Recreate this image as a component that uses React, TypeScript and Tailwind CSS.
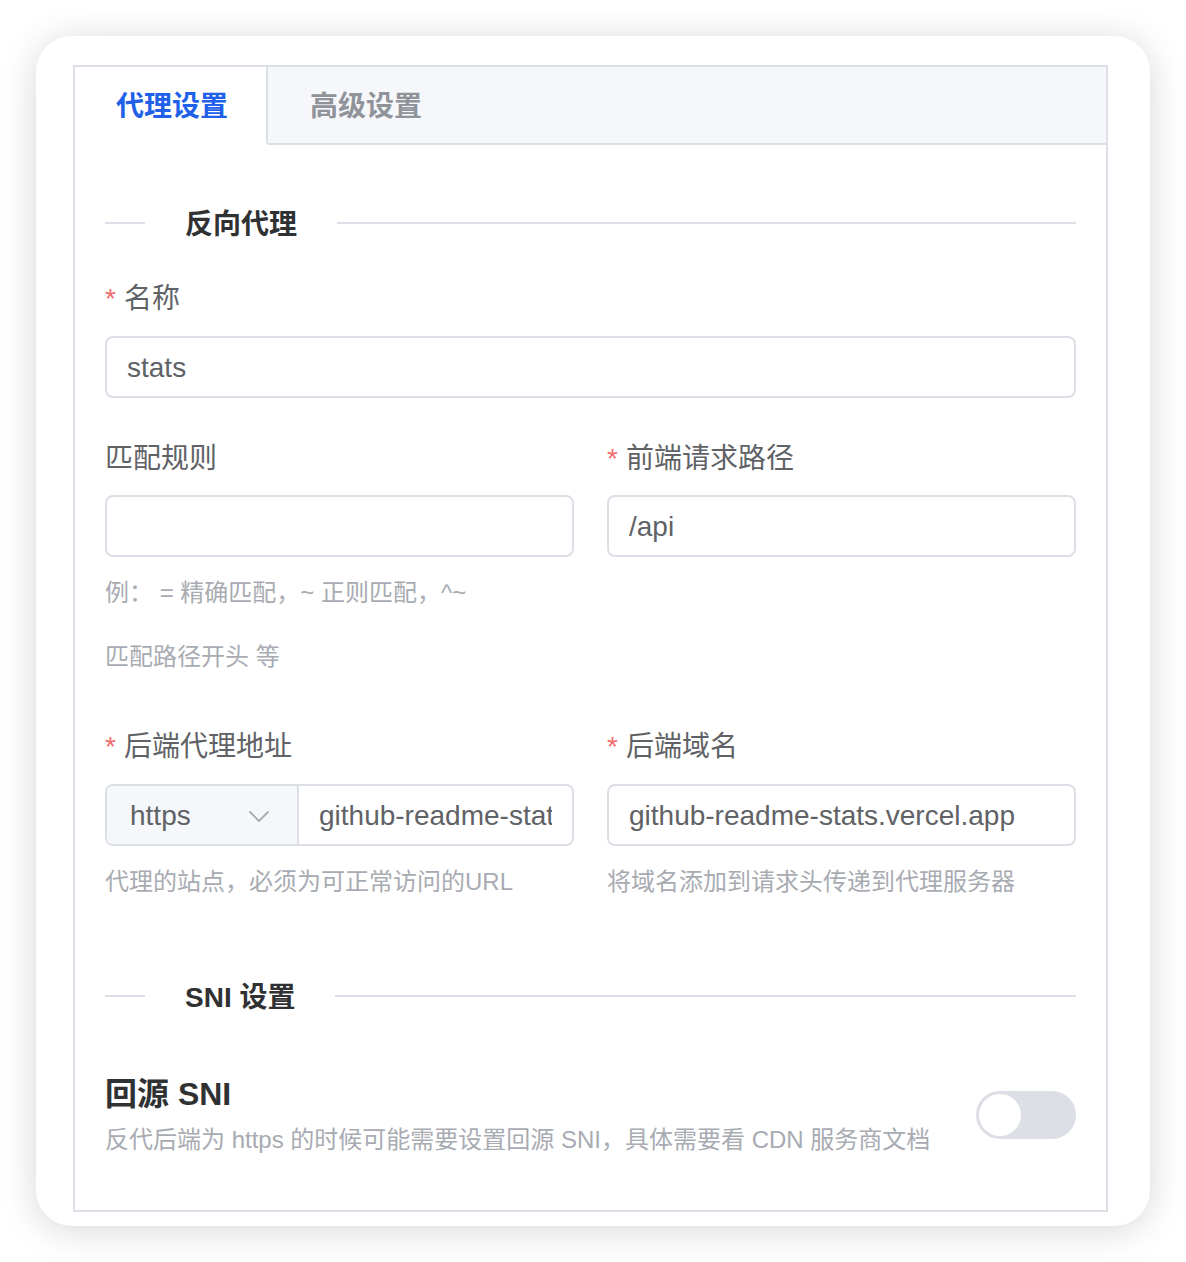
import React from "react";

function Label({ children, required }: { children: React.ReactNode; required?: boolean }) {
  return (
    <div className="flex h-[40px] items-center pt-[4px] text-[28px] leading-[36px] text-[#606266]">
      {required && <span className="mr-[8px] text-[#f56c6c]">*</span>}
      <span>{children}</span>
    </div>
  );
}

function TextInput({ value }: { value: string }) {
  return (
    <div className="flex h-[62px] items-center rounded-[8px] border-2 border-[#dcdfe6] bg-white px-[20px] pt-[2px] text-[28px] text-[#606266]">
      <div className="overflow-hidden whitespace-nowrap">{value}</div>
    </div>
  );
}

function Section({ title }: { title: string }) {
  return (
    <div className="flex h-[40px] items-center">
      <div className="h-[2px] w-[40px] bg-[#dcdfe6]" />
      <div className="mx-[40px] pt-[4px] text-[28px] font-bold leading-[36px] text-[#303133]">{title}</div>
      <div className="h-[2px] flex-1 bg-[#dcdfe6]" />
    </div>
  );
}

export default function App() {
  return (
    <div className="bg-white p-[36px] [font-family:'Liberation_Sans','Noto_Sans_CJK_SC',sans-serif]">
      <div className="rounded-[36px] bg-white pb-[14px] pl-[37px] pr-[42px] pt-[29px] shadow-[0_4px_36px_rgba(0,0,0,0.16)]">
        <div className="border-2 border-[#dcdfe6] bg-white">
          {/* Tabs */}
          <div className="flex h-[78px]">
            <div className="flex w-[193px] items-center border-b-2 border-r-2 border-b-transparent border-r-[#dcdfe6] bg-white pl-[41px] pt-[4px] text-[28px] font-semibold text-[#2160e8]">
              代理设置
            </div>
            <div className="flex flex-1 items-center border-b-2 border-[#dcdfe6] bg-[#f5f7fa] pl-[42px] pt-[4px] text-[28px] font-semibold text-[#909399]">
              高级设置
            </div>
          </div>

          {/* Content */}
          <div className="px-[30px] pb-[52px] pt-[58px]">
            <Section title="反向代理" />

            <div className="mt-[34px]">
              <Label required>名称</Label>
            </div>
            <div className="mt-[19px]">
              <TextInput value="stats" />
            </div>

            <div className="mt-[39px] grid grid-cols-2 gap-x-[33px]">
              <div>
                <Label>匹配规则</Label>
                <div className="mt-[18px]">
                  <TextInput value="" />
                </div>
                <div className="mt-[4px] text-[24px] leading-[64px] text-[#a8abb2]">
                  <div className="whitespace-nowrap">例： = 精确匹配，~ 正则匹配，^~</div>
                  <div className="whitespace-nowrap">匹配路径开头 等</div>
                </div>
              </div>
              <div>
                <Label required>前端请求路径</Label>
                <div className="mt-[18px]">
                  <TextInput value="/api" />
                </div>
              </div>
            </div>

            <div className="mt-[36px] grid grid-cols-2 gap-x-[33px]">
              <div>
                <Label required>后端代理地址</Label>
                <div className="mt-[19px] flex h-[62px] overflow-hidden rounded-[8px] border-2 border-[#dcdfe6] bg-white text-[28px] text-[#606266]">
                  <div className="flex w-[192px] shrink-0 items-center justify-between border-r-2 border-[#dcdfe6] bg-[#f5f7fa] pl-[23px] pr-[28px] pt-[2px]">
                    <span>https</span>
                    <svg width="20" height="11" viewBox="0 0 20 11" fill="none">
                      <path d="M1 1 L10 10 L19 1" stroke="#a8abb2" strokeWidth="1.8" strokeLinecap="round" strokeLinejoin="round" />
                    </svg>
                  </div>
                  <div className="flex min-w-0 flex-1 items-center px-[20px] pt-[2px]">
                    <div className="min-w-0 overflow-hidden whitespace-nowrap">github-readme-stats.vercel.app</div>
                  </div>
                </div>
                <div className="mt-[4px] whitespace-nowrap text-[24px] leading-[64px] text-[#a8abb2]">
                  代理的站点，必须为可正常访问的URL
                </div>
              </div>
              <div>
                <Label required>后端域名</Label>
                <div className="mt-[19px]">
                  <TextInput value="github-readme-stats.vercel.app" />
                </div>
                <div className="mt-[4px] whitespace-nowrap text-[24px] leading-[64px] text-[#a8abb2]">
                  将域名添加到请求头传递到代理服务器
                </div>
              </div>
            </div>

            <div className="mt-[62px]">
              <Section title="SNI 设置" />
            </div>

            <div className="mt-[56px] flex items-center justify-between">
              <div>
                <div className="text-[32px] font-bold leading-[44px] text-[#303133]">回源 SNI</div>
                <div className="mt-[6px] text-[24px] leading-[36px] text-[#a8abb2]">
                  反代后端为 https 的时候可能需要设置回源 SNI，具体需要看 CDN 服务商文档
                </div>
              </div>
              <div className="flex h-[48px] w-[100px] shrink-0 items-center rounded-full bg-[#dcdfe6] p-[3px]">
                <div className="h-[42px] w-[42px] rounded-full bg-white" />
              </div>
            </div>
          </div>
        </div>
      </div>
    </div>
  );
}
